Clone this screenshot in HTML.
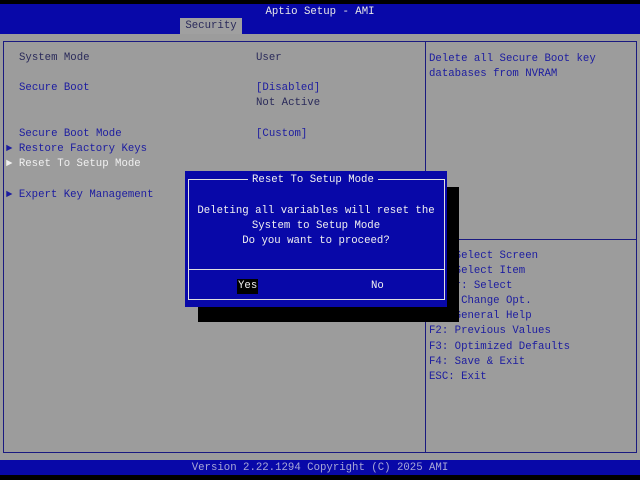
<!DOCTYPE html>
<html><head><meta charset="utf-8"><style>
*{margin:0;padding:0;box-sizing:border-box}
body{width:640px;height:480px;background:#000;position:relative;overflow:hidden;font-family:"Liberation Mono","DejaVu Sans Mono",monospace;font-size:10.7px;line-height:15px}
.a{position:absolute;white-space:pre}
.g{color:#2a2a5a}.b{color:#1c1ca0}.w{color:#f0f0f0}
</style></head><body>
<div class="a" style="left:0;top:4px;width:640px;height:30px;background:#0808a8"></div>
<div class="a w" style="left:0;top:5px;width:640px;text-align:center;color:#e8e8e8">Aptio Setup - AMI</div>
<div class="a" style="left:180px;top:18px;width:62px;height:16px;background:#a0a0a0;color:#2a2a5a;text-align:center;line-height:17px">Security</div>
<div class="a" style="left:0;top:34px;width:640px;height:426px;background:#9c9c9c"></div>
<div class="a" style="left:3px;top:41px;width:634px;height:412px;border:1px solid #1a1a80"></div>
<div class="a" style="left:425px;top:41px;width:1px;height:412px;background:#1a1a80"></div>
<div class="a" style="left:425px;top:239px;width:212px;height:1px;background:#1a1a80"></div>
<div class="a g" style="left:19px;top:51px">System Mode</div>
<div class="a g" style="left:256px;top:51px">User</div>
<div class="a b" style="left:19px;top:81px">Secure Boot</div>
<div class="a b" style="left:256px;top:81px">[Disabled]</div>
<div class="a g" style="left:256px;top:96px">Not Active</div>
<div class="a b" style="left:19px;top:127px">Secure Boot Mode</div>
<div class="a b" style="left:256px;top:127px">[Custom]</div>
<div class="a b" style="left:6px;top:142px">► Restore Factory Keys</div>
<div class="a w" style="left:6px;top:157px">► Reset To Setup Mode</div>
<div class="a b" style="left:6px;top:188px">► Expert Key Management</div>
<div class="a b" style="left:429px;top:52px">Delete all Secure Boot key
databases from NVRAM</div>
<div class="a b" style="left:429px;top:249px;line-height:15.1px">→←: Select Screen
↑↓: Select Item
Enter: Select
+/-: Change Opt.
F1: General Help
F2: Previous Values
F3: Optimized Defaults
F4: Save &amp; Exit
ESC: Exit</div>
<div class="a" style="left:447px;top:187px;width:12px;height:135px;background:#000"></div>
<div class="a" style="left:198px;top:307px;width:261px;height:15px;background:#000"></div>
<div class="a" style="left:185px;top:171px;width:262px;height:136px;background:#0808a8"></div>
<div class="a" style="left:188px;top:179px;width:257px;height:121px;border:1px solid #e0e0e0"></div>
<div class="a" style="left:188px;top:269px;width:257px;height:1px;background:#e0e0e0"></div>
<div class="a w" style="left:248px;top:173px;background:#0808a8;padding:0 4px">Reset To Setup Mode</div>
<div class="a w" style="left:185px;top:204px;width:262px;text-align:center">Deleting all variables will reset the
System to Setup Mode
Do you want to proceed?</div>
<div class="a w" style="left:237px;top:279px;background:#000;padding:0 1px">Yes</div>
<div class="a w" style="left:371px;top:279px">No</div>
<div class="a" style="left:0;top:460px;width:640px;height:15px;background:#0808a8"></div>
<div class="a" style="left:0;top:461px;width:640px;text-align:center;color:#a8a8d8">Version 2.22.1294 Copyright (C) 2025 AMI</div>
</body></html>
